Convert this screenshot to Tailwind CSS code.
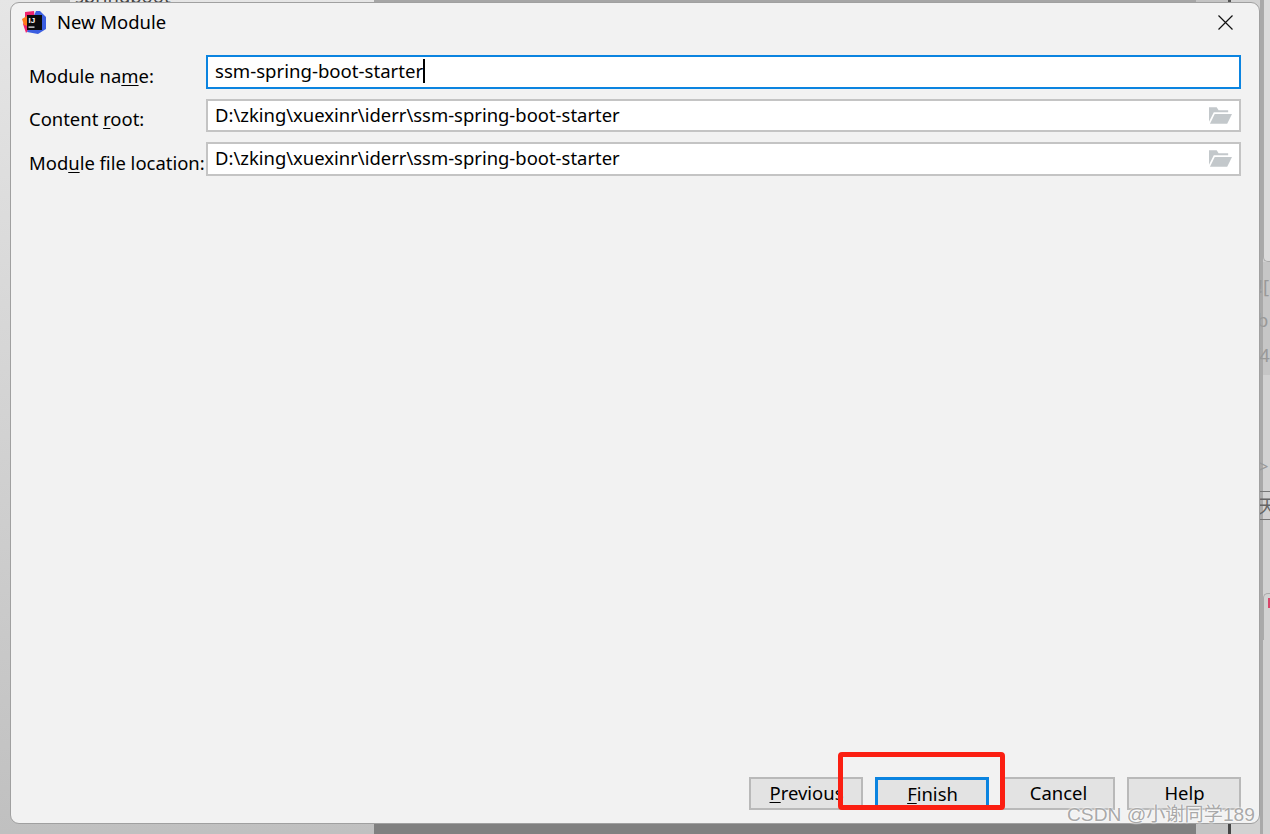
<!DOCTYPE html>
<html lang="en">
<head>
  <meta charset="UTF-8">
  <title>New Module</title>
  <script src="https://cdn.jsdelivr.net/npm/@tailwindcss/browser@4"></script>
</head>
<body class="relative w-[1270px] h-[834px] overflow-hidden bg-[#d2d2d2] font-['Noto_Sans',sans-serif] text-[18.45px] text-black">

  <!-- desktop behind the dialog -->
  <div class="absolute left-0 top-0 w-[374px] h-[834px] bg-gradient-to-b from-[#e6e6e6] to-[#c0c0c0]"></div>
  <div class="absolute left-[50px] top-0 w-[20px] h-[10px] bg-[#b4b4b4]"></div>
  <div class="absolute left-[374px] top-0 w-[822px] h-[12px] bg-[#a6a6a6]"></div>
  <div class="absolute left-[1196px] top-0 w-[32px] h-[12px] bg-[#c4c4c4]"></div>
  <div class="absolute left-[1228px] top-0 w-[3px] h-[12px] bg-[#555]"></div>
  <div class="absolute left-[374px] top-[820px] w-[822px] h-[14px] bg-[#808080]"></div>
  <div class="absolute left-[1196px] top-[820px] w-[32px] h-[14px] bg-[#c4c4c4]"></div>
  <div class="absolute left-[1228px] top-[820px] w-[3px] h-[14px] bg-[#444]"></div>
  <p class="absolute left-[75px] top-[-18px] text-[#444]">springboot</p>

  <div class="absolute left-[1260px] top-0 w-[3px] h-[834px] bg-[#a9a9a9]"></div>
  <div class="absolute left-[1263px] top-0 w-[7px] h-[262px] bg-[#dcdcdc] border-l border-b border-[#aaa] rounded-bl-[5px]"></div>
  <div class="absolute left-[1263px] top-[262px] w-[7px] h-[113px] bg-[#c6c6c6]"></div>
  <div class="absolute left-[1260px] top-[491px] w-[10px] h-[29px] border-y border-[#777]"></div>
  <div class="absolute left-[1263px] top-[593px] w-[7px] h-[47px] border-l border-t border-[#aaa] rounded-tl-[5px]"></div>
  <div class="absolute left-[1268px] top-[598px] w-[2px] h-[10px] bg-[#d8456a]"></div>
  <p class="absolute left-[1258px] top-[272px] text-[#999]">![</p>
  <p class="absolute left-[1257px] top-[306px] text-[#999]">b</p>
  <p class="absolute left-[1253px] top-[341px] text-[#999]">f4</p>
  <p class="absolute left-[1258px] top-[452px] text-[#999]">&gt;</p>
  <p class="absolute left-[1258px] top-[492px] font-['Noto_Sans_CJK_SC',sans-serif] text-[#666]">天</p>

  <!-- dialog -->
  <div class="absolute left-[10px] top-[2px] w-[1250px] h-[822px] flex flex-col bg-[#f2f2f2] border border-[#a0a0a0] rounded-[9px]">
    <div class="flex items-center h-[38px] pl-[11px] pr-[26px]">
      <svg class="w-[25px] h-[25px]" viewBox="0 0 25 25">
        <path d="M3 2 12 1 13 12 4 23 1 14 3 11Z" fill="#f0246f"/>
        <path d="M0 9 5 6 6 16 2 15Z" fill="#ff7a1a"/>
        <path d="M14 1 18 1 24 7 24 19 16 24 5 22Z" fill="#3b5ee0"/>
        <rect x="5" y="5" width="15" height="15" fill="#0b0b0b"/>
        <text x="6.5" y="12.5" font-family="Liberation Sans" font-size="8" font-weight="700" fill="#fff">IJ</text>
        <rect x="6.5" y="16.5" width="6" height="1.2" fill="#fff"/>
      </svg>
      <span class="ml-[10px]">New Module</span>
      <svg class="ml-auto w-[15px] h-[15px]" viewBox="0 0 15 15" fill="none" stroke="#111" stroke-width="1.2"><path d="M.5.5 14.5 14.5M14.5.5.5 14.5"/></svg>
    </div>

    <div class="flex flex-col gap-[10px] pl-[18px] pr-[18px] pt-[14px]">
      <div class="flex items-center h-[34px]">
        <label class="w-[177px] shrink-0 pt-[8px]">Module na<span class="underline underline-offset-2">m</span>e:</label>
        <div class="flex-1 h-[34px] flex items-center px-[7px] pb-[2px] bg-white border-2 border-[#0b84e0]">
          <span class="text-[18.6px]">ssm-spring-boot-starter</span><span class="w-[2px] h-[24px] bg-black"></span>
        </div>
      </div>
      <div class="flex items-center h-[33px]">
        <label class="w-[177px] shrink-0 pt-[7px]">Content <span class="underline underline-offset-2">r</span>oot:</label>
        <div class="flex-1 h-[33px] flex items-center justify-between pl-[7px] pr-[7px] bg-white border-2 border-[#c4c4c4]">
          <span class="pb-[2px]">D:\zking\xuexinr\iderr\ssm-spring-boot-starter</span>
          <svg class="w-[23px] h-[17px]" viewBox="0 0 24 17" fill="#c3c8cb"><path d="M0 0H8L10 3H20V5H5L0 15Z"/><path d="M6 7H24L19 17H1Z"/></svg>
        </div>
      </div>
      <div class="flex items-center h-[34px]">
        <label class="w-[177px] shrink-0 pt-[7px]">Mod<span class="underline underline-offset-2">u</span>le file location:</label>
        <div class="flex-1 h-[34px] flex items-center justify-between pl-[7px] pr-[7px] pb-[2px] bg-white border-2 border-[#c4c4c4]">
          <span>D:\zking\xuexinr\iderr\ssm-spring-boot-starter</span>
          <svg class="w-[23px] h-[17px]" viewBox="0 0 24 17" fill="#c3c8cb"><path d="M0 0H8L10 3H20V5H5L0 15Z"/><path d="M6 7H24L19 17H1Z"/></svg>
        </div>
      </div>
    </div>

    <div class="mt-auto flex justify-end gap-[12px] pr-[18px] pb-[13px]">
      <button class="w-[114px] h-[33px] pb-[2px] pl-[1px] bg-[#e3e3e3] border-2 border-[#b9b9b9]"><span class="underline underline-offset-2">P</span>revious</button>
      <button class="w-[114px] h-[33px] pb-[4px] pl-[1px] bg-[#e3e3e3] border-[3px] border-[#0b84e0]"><span class="underline underline-offset-2">F</span>inish</button>
      <button class="w-[114px] h-[33px] pb-[2px] pl-[1px] bg-[#e3e3e3] border-2 border-[#b9b9b9]">Cancel</button>
      <button class="w-[114px] h-[33px] pb-[2px] pl-[1px] bg-[#e3e3e3] border-2 border-[#b9b9b9]">Help</button>
    </div>
  </div>

  <!-- annotation and watermark over the screenshot -->
  <div class="absolute left-[838px] top-[752px] w-[167px] h-[58px] border-[5px] border-[#fb1f12] rounded-[4px]"></div>
  <p class="absolute left-[1067px] top-[801px] font-['Liberation_Sans','Noto_Sans_CJK_SC',sans-serif] text-[19.2px] text-[#a9a9a9] [text-shadow:0_0_2px_#fff,0_0_2px_#fff]">CSDN @小谢同学189</p>
</body>
</html>
